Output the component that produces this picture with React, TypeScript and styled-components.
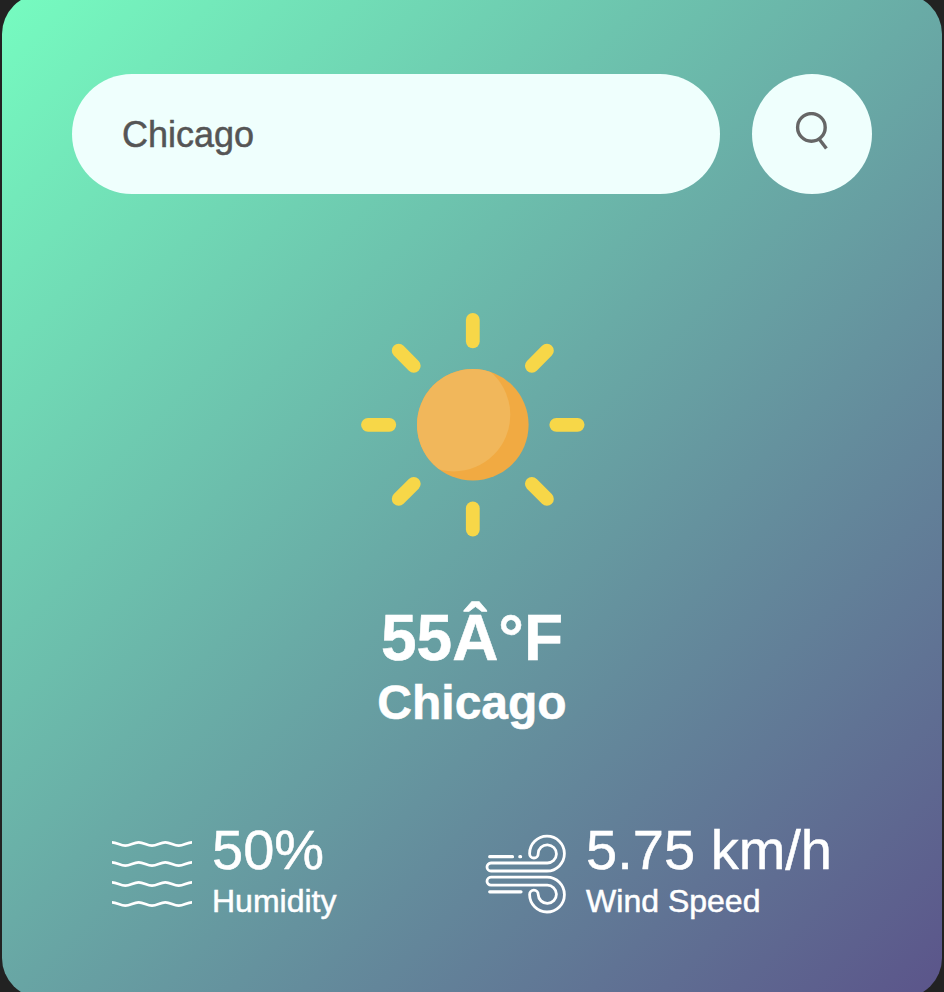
import React, { useState } from "react";
import styled, { createGlobalStyle } from "styled-components";

const GlobalStyle = createGlobalStyle`
  * { box-sizing: border-box; margin: 0; padding: 0; }
  html, body { height: 100%; overflow: hidden; background: #222; }
  body { font-family: "Liberation Sans", Arial, Helvetica, sans-serif; }
`;

const Page = styled.main`
  height: 992px;
  overflow: hidden;
  display: flex;
  justify-content: center;
  align-items: center;
`;

const Card = styled.section`
  flex: none;
  width: 940px;
  height: 1004px;
  padding: 80px 70px;
  border-radius: 40px;
  background: linear-gradient(135deg, #76fcc0, #5b548a);
  color: #fff;
  text-align: center;
  -webkit-text-stroke: 0.5px currentColor;
`;

const Search = styled.form`
  display: flex;
  justify-content: space-between;
  align-items: center;
`;

const SearchInput = styled.input`
  width: 648px;
  height: 120px;
  padding: 2px 50px 0;
  border: 0;
  outline: 0;
  border-radius: 60px;
  background: #effffd;
  color: #555;
  font: 36px "Liberation Sans", Arial, sans-serif;
  -webkit-text-stroke: 0.5px currentColor;
`;

const SearchButton = styled.button`
  display: grid;
  place-items: center;
  width: 120px;
  height: 120px;
  border: 0;
  border-radius: 50%;
  background: #effffd;
  cursor: pointer;
`;

const SunIcon = styled.svg`
  display: block;
  width: 340px;
  height: 340px;
  margin: 60px auto 7px;
`;

const Temperature = styled.h1`
  font-size: 64px;
  line-height: 74px;
  font-weight: 700;
`;

const City = styled.h2`
  font-size: 48px;
  line-height: 56px;
  font-weight: 700;
`;

const Details = styled.div`
  display: flex;
  justify-content: space-between;
  margin-top: 87px;
  padding: 0 40px;
`;

const Metric = styled.div`
  display: flex;
  gap: 20px;
  text-align: left;
`;

const MetricIcon = styled.svg`
  flex: none;
  width: 80px;
  height: 80px;
  margin-top: 16px;
  overflow: visible;
  fill: none;
  stroke: #fff;
  stroke-width: 2.8;
`;

const MetricValue = styled.p`
  font-size: 56px;
  line-height: 64px;
  white-space: nowrap;
`;

const MetricLabel = styled.p`
  font-size: 32px;
  line-height: 39px;
`;

const ANGLES = [0, 45, 90, 135, 180, 225, 270, 315];

function Sun() {
  return (
    <SunIcon viewBox="0 0 340 340" aria-label="Clear">
      <defs>
        <clipPath id="disk">
          <circle cx="170.8" cy="170.8" r="55.8" />
        </clipPath>
      </defs>
      <circle cx="170.8" cy="170.8" r="55.8" fill="#f1aa42" />
      <circle cx="151.7" cy="160.8" r="56.6" fill="#f1b75b" clipPath="url(#disk)" />
      {ANGLES.map((angle) => (
        <path
          key={angle}
          d="M170.8 66V87.3"
          stroke="#f7d748"
          strokeWidth="13.8"
          strokeLinecap="round"
          transform={`rotate(${angle} 170.8 170.8)`}
        />
      ))}
    </SunIcon>
  );
}

function HumidityIcon() {
  return (
    <MetricIcon viewBox="0 0 80 80">
      {[8.4, 28.4, 48.4, 68.4].map((y) => (
        <path
          key={y}
          d={`M0 ${y}c5 0 8.33 3.3 13.33 3.3s8.33-3.3 13.33-3.3 8.33 3.3 13.34 3.3 8.33-3.3 13.33-3.3 8.33 3.3 13.34 3.3 8.33-3.3 13.33-3.3`}
        />
      ))}
    </MetricIcon>
  );
}

const GUST =
  "M61 29H5A4 4 0 0 0 5 37H61A17.4 17.4 0 1 0 43.6 19.7A4.3 4.3 0 0 0 52.2 19.7A9.1 9.1 0 1 1 61 29";

function WindIcon() {
  return (
    <MetricIcon viewBox="0 0 80 80" strokeLinecap="round" strokeLinejoin="round">
      <path d={GUST} />
      <path d={GUST} transform="matrix(1 0 0 -1 0 80.2)" />
      <path d="M3.7 22.7H26.5M33.8 22.7h.8M3.7 57.8H35" strokeWidth="3.2" />
    </MetricIcon>
  );
}

export default function App() {
  const [query, setQuery] = useState("Chicago");
  return (
    <>
      <GlobalStyle />
      <Page>
        <Card>
          <Search onSubmit={(e) => e.preventDefault()}>
            <SearchInput
              value={query}
              spellCheck={false}
              aria-label="City"
              onChange={(e) => setQuery(e.target.value)}
            />
            <SearchButton aria-label="Search">
              <svg width="44" height="44" viewBox="0 0 44 44" fill="none" stroke="#666" strokeWidth="3.4">
                <circle cx="21.4" cy="15.4" r="13.8" />
                <path d="M29.3 27.2L36.4 36.6" />
              </svg>
            </SearchButton>
          </Search>
          <Sun />
          <Temperature>55Â°F</Temperature>
          <City>Chicago</City>
          <Details>
            <Metric>
              <HumidityIcon />
              <div>
                <MetricValue>50%</MetricValue>
                <MetricLabel>Humidity</MetricLabel>
              </div>
            </Metric>
            <Metric>
              <WindIcon />
              <div>
                <MetricValue>5.75 km/h</MetricValue>
                <MetricLabel>Wind Speed</MetricLabel>
              </div>
            </Metric>
          </Details>
        </Card>
      </Page>
    </>
  );
}
